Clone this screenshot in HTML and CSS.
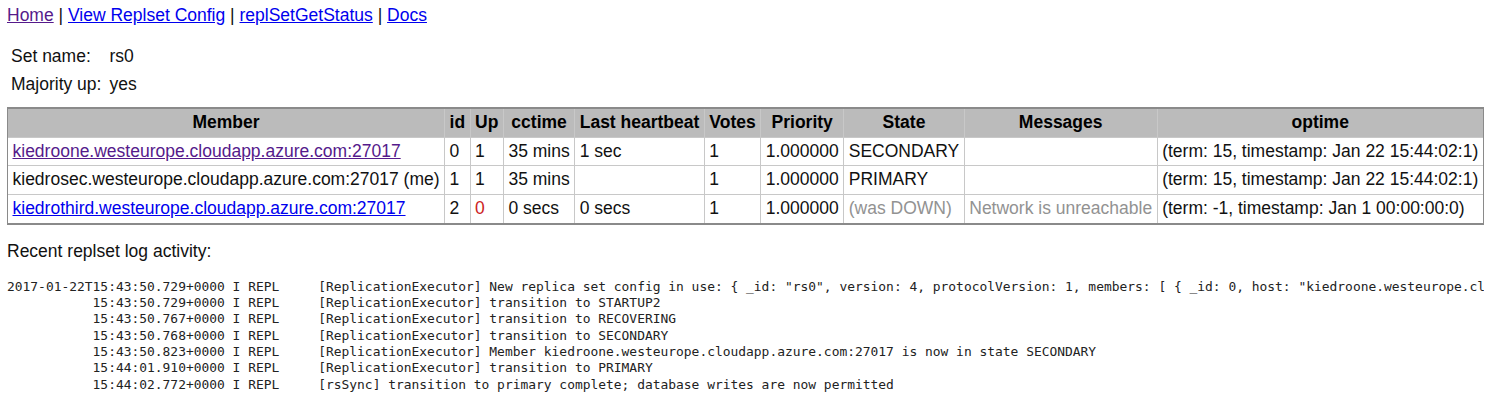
FILE: index.html
```html
<!DOCTYPE html>
<html>
<head>
<meta charset="utf-8">
<title>Replica Set Status</title>
<link rel="stylesheet" href="styles.css">
</head>
<body>
<div class="nav"><a class="visited" href="#">Home</a> | <a href="#">View Replset Config</a> | <a href="#">replSetGetStatus</a> | <a href="#">Docs</a></div>
<table class="info">
  <tr><td>Set name:</td><td>rs0</td></tr>
  <tr><td>Majority up:</td><td>yes</td></tr>
</table>
<table class="members">
  <tr>
    <th>Member</th><th>id</th><th>Up</th><th>cctime</th><th>Last heartbeat</th><th>Votes</th><th>Priority</th><th>State</th><th>Messages</th><th>optime</th>
  </tr>
  <tr>
    <td><a class="visited" href="#">kiedroone.westeurope.cloudapp.azure.com:27017</a></td><td>0</td><td>1</td><td>35 mins</td><td>1 sec</td><td>1</td><td>1.000000</td><td>SECONDARY</td><td></td><td>(term: 15, timestamp: Jan 22 15:44:02:1)</td>
  </tr>
  <tr>
    <td>kiedrosec.westeurope.cloudapp.azure.com:27017 (me)</td><td>1</td><td>1</td><td>35 mins</td><td></td><td>1</td><td>1.000000</td><td>PRIMARY</td><td></td><td>(term: 15, timestamp: Jan 22 15:44:02:1)</td>
  </tr>
  <tr>
    <td><a href="#">kiedrothird.westeurope.cloudapp.azure.com:27017</a></td><td>2</td><td><span class="down">0</span></td><td>0 secs</td><td>0 secs</td><td>1</td><td>1.000000</td><td><span class="gray">(was DOWN)</span></td><td><span class="gray">Network is unreachable</span></td><td>(term: -1, timestamp: Jan 1 00:00:00:0)</td>
  </tr>
</table>
<p class="log-title">Recent replset log activity:</p>
<pre class="log">2017-01-22T15:43:50.729+0000 I REPL     [ReplicationExecutor] New replica set config in use: { _id: "rs0", version: 4, protocolVersion: 1, members: [ { _id: 0, host: "kiedroone.westeurope.cloudapp.azure.com:27017", arbiterOnly: false, buildIndexes: true, hidden: false, priority: 1.0 } ] }
           15:43:50.729+0000 I REPL     [ReplicationExecutor] transition to STARTUP2
           15:43:50.767+0000 I REPL     [ReplicationExecutor] transition to RECOVERING
           15:43:50.768+0000 I REPL     [ReplicationExecutor] transition to SECONDARY
           15:43:50.823+0000 I REPL     [ReplicationExecutor] Member kiedroone.westeurope.cloudapp.azure.com:27017 is now in state SECONDARY
           15:44:01.910+0000 I REPL     [ReplicationExecutor] transition to PRIMARY
           15:44:02.772+0000 I REPL     [rsSync] transition to primary complete; database writes are now permitted
</pre>
</body>
</html>
```
FILE: styles.css
```css
html {
  background: #fff;
}
body {
  margin: 5px 8px 0 7px;
  font-family: "Liberation Sans", Arial, sans-serif;
  font-size: 17.5px;
  line-height: 20px;
  color: #111;
  overflow: hidden;
}
a {
  color: #0000ee;
  text-decoration: underline;
}
a.visited {
  color: #551a8b;
}
.nav {
  line-height: 20px;
}
.info {
  border-collapse: collapse;
  margin-top: 17px;
}
.info td {
  padding: 4px;
}
.members {
  border-collapse: collapse;
  border: 2px solid #8a8a8a;
  margin: 9px 0 0 -1px;
}
.members th,
.members td {
  padding: 4px 4.5px;
  line-height: 19.7px;
  border: 1px solid #c8c8c8;
  white-space: nowrap;
  text-align: left;
}
.members th {
  background: #bbb;
  color: #000;
  font-weight: bold;
  text-align: center;
}
.down {
  color: #cc2222;
}
.gray {
  color: #929292;
}
.log-title {
  margin: 16px 0 0 0;
}
.log {
  margin: 18px 0 0 0;
  font-family: "DejaVu Sans Mono", "Liberation Mono", monospace;
  font-size: 12.93px;
  line-height: 16.33px;
  color: #222;
  overflow: hidden;
}
```
